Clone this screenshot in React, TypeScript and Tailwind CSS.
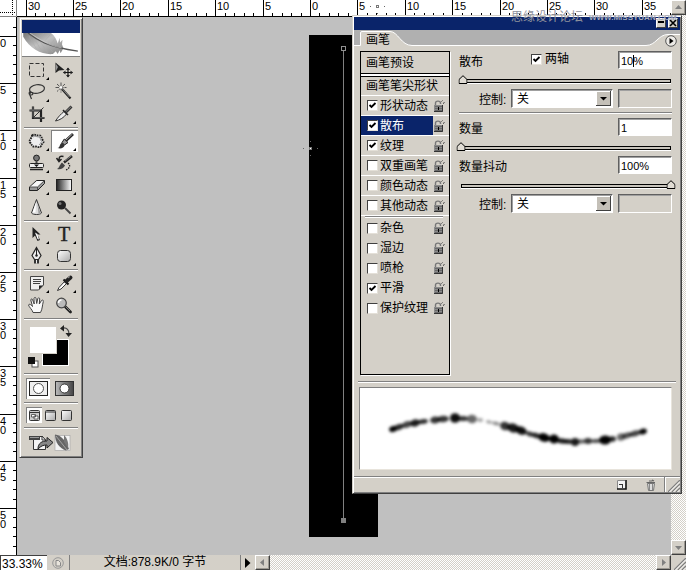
import { useEffect, useState } from "react"
import type { ReactNode } from "react"
import clsx from "clsx"

const range = (from: number, to: number) => Array.from({ length: Math.max(0, to - from + 1) }, (_, i) => from + i)

function useWindowSize() {
  const [size, setSize] = useState({ width: window.innerWidth, height: window.innerHeight })

  useEffect(() => {
    const onResize = () => setSize({ width: window.innerWidth, height: window.innerHeight })
    window.addEventListener("resize", onResize)
    return () => window.removeEventListener("resize", onResize)
  }, [])

  return size
}

// ---------- rulers ----------

function HorizontalRuler() {
  const { width } = useWindowSize()
  const last = Math.floor((width - 15 - 17 - 293 - 16) / 9.48)

  return (
    <svg className="block h-[17px] w-full" aria-hidden="true">
      {range(-30, last + 2).map((n) => {
        const x = Math.round(293 + n * 9.48)
        const major = n % 5 === 0
        return (
          <g key={n}>
            <rect x={x} y={major ? 0 : 13} width="1" height={major ? 17 : 4} />
            {major && n <= last && (
              <text x={x + 2} y="10" className="text-[11px]">
                {Math.abs(n)}
              </text>
            )}
          </g>
        )
      })}
      <rect y="16" width="100%" height="1" />
    </svg>
  )
}

function VerticalRuler() {
  const { height } = useWindowSize()
  const last = Math.floor((height - 32 - 19) / 9.44)
  const tickY = (n: number) => Math.round(19 + n * 9.44)

  return (
    <div className="relative w-[17px] shrink-0 bg-white" aria-hidden="true">
      <svg className="block h-full w-full">
        {range(-1, last).map((n) => (
          <rect key={n} x={n % 5 === 0 ? 0 : 13} y={tickY(n)} width={n % 5 === 0 ? 17 : 4} height="1" />
        ))}
        <rect x="16" width="1" height="100%" />
      </svg>
      {range(0, last - 2)
        .filter((n) => n % 5 === 0)
        .map((n) => (
          <span key={n} style={{ top: tickY(n) + 3 }} className="absolute left-0 w-[7px] text-[11px] leading-[9px] break-all">
            {n}
          </span>
        ))}
    </div>
  )
}

// ---------- scrollbars ----------

const dither = "bg-[repeating-conic-gradient(#ffffff_0_25%,#d4d0c8_0_50%)] bg-[length:2px_2px]"

function ScrollButton({ label, points }: { label: string; points: string }) {
  return (
    <button
      aria-label={label}
      className="h-[15px] w-[15px] shrink-0 border border-t-white border-l-white border-r-[#404040] border-b-[#404040] bg-[#d4d0c8] shadow-[inset_-1px_-1px_#9a9790]"
    >
      <svg viewBox="0 0 13 13" className="block h-[13px] w-[13px]">
        <polygon points={points} fill="#808080" />
      </svg>
    </button>
  )
}

function Grip() {
  return (
    <svg viewBox="0 0 12 12" className="block size-3 shrink-0">
      <path d="M0 12L12 0M4 12L12 4M8 12L12 8" stroke="#808080" strokeWidth="1.3" />
      <path d="M1.5 12L12 1.5M5.5 12L12 5.5M9.5 12L12 9.5" stroke="#fff" strokeWidth="1" />
    </svg>
  )
}

// ---------- toolbox ----------

type Tool = { name: string; more?: boolean; icon: ReactNode }

const toolGroups: Tool[][] = [
  [
    {
      name: "矩形选框",
      more: true,
      icon: <rect x="5.5" y="4.5" width="14" height="13" fill="none" stroke="#333" strokeDasharray="4 2" />,
    },
    {
      name: "移动",
      icon: (
        <>
          <path d="M4.5 3.5V14L8 11.5L13.5 11Z" fill="#222" />
          <path d="M5 5V12L7 8Z" fill="#999" />
          <path d="M12.5 13.5H21.5M17 9V18" stroke="#111" strokeWidth="1.2" />
          <path d="M17 8.5L19 11H15ZM17 18.5L19 16H15ZM12 13.5L14.5 11.5V15.5ZM22 13.5L19.5 11.5V15.5Z" fill="#222" />
        </>
      ),
    },
    {
      name: "套索",
      more: true,
      icon: (
        <g fill="none" stroke="#333" strokeWidth="1.2">
          <ellipse cx="13" cy="8" rx="7.5" ry="4.3" transform="rotate(-8 13 8)" />
          <path d="M6 10.5C4.5 12 5 14 7 14C9 14 9.5 12 8 11.5C6 11.2 5 13 6.500 15.5L7.5 18" />
        </g>
      ),
    },
    {
      name: "魔棒",
      icon: (
        <>
          <path d="M4.5 6.5H15.5M10 1.5V11.5M6 3L14 10.5M14 3L6 10.5" stroke="#555" strokeDasharray="3.5 1" />
          <path d="M11 8L19.5 17.5" stroke="#222" strokeWidth="2.2" />
          <path d="M11.5 8L18.5 16" stroke="#aaa" strokeWidth=".7" />
          <circle cx="10" cy="6.5" r="1.3" fill="#fff" />
        </>
      ),
    },
    {
      name: "裁切",
      icon: (
        <>
          <path d="M9 3.5V15H20.5M5.5 7.5H17V19" fill="none" stroke="#222" strokeWidth="2.2" />
          <path d="M9 4V14.5M6 7.2H16.5M10 14.8H20" stroke="#888" strokeWidth=".7" />
          <path d="M10 14L19.5 4.5" stroke="#333" />
        </>
      ),
    },
    {
      name: "切片",
      more: true,
      icon: (
        <>
          <path d="M4.5 18C7 14 10 11 13 8.5L15.5 11C13 14.5 9 17 4.5 18Z" fill="#eee" stroke="#333" />
          <path d="M12 7L17 12" stroke="#222" strokeWidth="1.5" />
          <path d="M14.5 9.5L20.5 3.5" stroke="#333" strokeWidth="2.8" />
          <path d="M15 8.5L20 3.8" stroke="#999" strokeWidth=".8" />
        </>
      ),
    },
  ],
  [
    {
      name: "修补",
      more: true,
      icon: (
        <>
          <path d="M8 5.5C11 3.5 12 6 15 5.5C18 5.5 17 8 19 10.5C21 13 17 13.5 17 16C15 18.5 13 16 10.5 16.5C8 17 8 14.5 6 12.5C4.5 10 8 8.5 8 5.5Z" fill="#eee" stroke="#222" strokeWidth="1.9" strokeDasharray="1.7 .8" />
          <path d="M9 7C11 5.5 13 7 15 7C17 8 16 10 17.5 11.5C17 13 16 14 15 15" fill="none" stroke="#999" />
        </>
      ),
    },
    {
      name: "画笔",
      more: true,
      icon: (
        <>
          <path d="M14 11.5L22 4" stroke="#222" strokeWidth="2.8" />
          <path d="M15 10L21.5 4" stroke="#bbb" strokeWidth=".9" />
          <path d="M13.3 9L17 12.5L13.5 15L11 12.5Z" fill="#999" stroke="#222" />
          <path d="M6.5 18C9.5 17.5 8 14 11.2 12.5L13.7 15C13 18 10 19 6.500 18Z" fill="#333" />
        </>
      ),
    },
    {
      name: "图章",
      more: true,
      icon: (
        <>
          <circle cx="12.5" cy="6" r="2.9" fill="#777" stroke="#222" />
          <path d="M11.5 9H13.5V12.5H11.5Z" fill="#444" />
          <rect x="5.5" y="11.5" width="14" height="4" rx="1" fill="#eee" stroke="#222" />
          <path d="M10 12.5H15L12.5 15Z" fill="#111" />
          <path d="M6 17.5H19" stroke="#222" strokeWidth="1.5" />
        </>
      ),
    },
    {
      name: "历史记录画笔",
      more: true,
      icon: (
        <>
          <path d="M13 10.5L21 4" stroke="#222" strokeWidth="2.5" />
          <path d="M14 9L20.5 3.8" stroke="#aaa" strokeWidth=".7" />
          <path d="M6 17C8.5 16 8 13.5 11 10.5L14 13.5C12.5 16.5 9.5 18 6 17Z" fill="#444" />
          <path d="M12.500 4.5C9 3.5 8 5 8 8M5.5 6L8 9.5L10.5 7" fill="none" stroke="#222" strokeWidth="1.5" />
          <path d="M17 11C20 13 18.5 17 14.5 18" fill="none" stroke="#222" strokeWidth="1.3" strokeDasharray="1.5 1" />
        </>
      ),
    },
    {
      name: "橡皮擦",
      more: true,
      icon: (
        <>
          <path d="M5.5 13L12.5 6.5H20.5V9.5L13.5 16.5H5.5Z" fill="#999" stroke="#222" />
          <path d="M6 13L12.7 7H20L13.5 13Z" fill="#f8f8f8" />
          <path d="M5.5 13H13.5L20.5 6.5M13.5 13V16.5" fill="none" stroke="#444" strokeWidth=".9" />
        </>
      ),
    },
    {
      name: "渐变",
      more: true,
      icon: (
        <>
          <linearGradient id="gradientTool">
            <stop offset="0" stopColor="#222" />
            <stop offset="1" stopColor="#fff" />
          </linearGradient>
          <rect x="5.5" y="5.5" width="15" height="11" fill="url(#gradientTool)" stroke="#222" />
        </>
      ),
    },
    {
      name: "锐化",
      more: true,
      icon: (
        <>
          <path d="M12.5 3.5L17.5 17C16 19 9 19 7.5 17Z" fill="#ddd" stroke="#333" />
          <path d="M12 6L8.5 16.5H11.5Z" fill="#fff" />
          <path d="M13.5 8L16.5 17L14.5 17.5Z" fill="#999" />
        </>
      ),
    },
    {
      name: "减淡",
      more: true,
      icon: (
        <>
          <circle cx="10.5" cy="9" r="4.5" fill="#222" />
          <circle cx="9" cy="7.5" r="1.5" fill="#777" />
          <path d="M14 12L19.5 17.5" stroke="#444" strokeWidth="1.8" />
        </>
      ),
    },
  ],
  [
    {
      name: "路径选择",
      more: true,
      icon: (
        <>
          <path d="M8.5 4V15L11 12.5L13.500 18L16 17L13.5 11.5H16.500Z" fill="#222" />
          <path d="M11 9.5L13.5 11L15 16.5L13.500 16Z" fill="#fff" />
        </>
      ),
    },
    {
      name: "文字",
      more: true,
      icon: (
        <text x="13" y="18" textAnchor="middle" fill="#222" stroke="#222" strokeWidth=".4" className="font-['Liberation_Serif',serif] text-[20px]">
          T
        </text>
      ),
    },
    {
      name: "钢笔",
      more: true,
      icon: (
        <>
          <path d="M12.5 2.5L17 10.5L14.5 14.5H10.5L8 10.5Z" fill="#eee" stroke="#222" strokeWidth="1.2" />
          <path d="M12.5 3.5V10" stroke="#222" />
          <circle cx="12.5" cy="10.5" r="1.2" fill="#222" />
          <path d="M10 14.5H15V18.5H10Z" fill="#333" />
          <path d="M12.5 15V18.5" stroke="#eee" />
        </>
      ),
    },
    {
      name: "圆角矩形",
      more: true,
      icon: (
        <>
          <linearGradient id="shapeTool" x2="1" y2="1">
            <stop offset="0" stopColor="#fff" />
            <stop offset="1" stopColor="#aaa" />
          </linearGradient>
          <rect x="6.5" y="5.5" width="13" height="11" rx="3" fill="url(#shapeTool)" stroke="#333" />
        </>
      ),
    },
  ],
  [
    {
      name: "注释",
      more: true,
      icon: (
        <>
          <path d="M6.5 4.5H19.5V13L14.5 18H6.5Z" fill="#f0f0f0" stroke="#444" />
          <path d="M19 13.5H15V17.5Z" fill="#222" />
          <path d="M9 7.5H17M9 9.5H17M9 11.5H16" stroke="#444" />
        </>
      ),
    },
    {
      name: "吸管",
      more: true,
      icon: (
        <>
          <path d="M6.5 18.5L8 15.5L14 9L16 11L10 17Z" fill="#fff" stroke="#333" />
          <path d="M12.5 7.5L17.5 12.5" stroke="#111" strokeWidth="2" />
          <path d="M15 9.5L19.5 5.5" stroke="#222" strokeWidth="4" strokeLinecap="round" />
          <path d="M17 6L19 4.5" stroke="#999" />
        </>
      ),
    },
    {
      name: "抓手",
      icon: (
        <path
          d="M9 18.5C8.5 16 5 13 4.5 11C5 9.5 7 10.5 8.5 12.5L6.8 6C7 4.5 8.3 4.7 8.7 6L10.2 10L10 4.5C10.3 3 11.8 3 12 4.5L12.7 9.5L13.8 4.5C14.5 3.3 15.7 3.8 15.7 5L15.3 10L17.5 6.5C18.5 5.5 19.7 6.3 19.3 7.5C18.3 11 18.5 15 16.5 18.5Z"
          fill="#fafafa"
          stroke="#444"
        />
      ),
    },
    {
      name: "缩放",
      icon: (
        <>
          <path d="M14.5 13L19.5 18" stroke="#222" strokeWidth="2.8" strokeLinecap="round" />
          <path d="M14.5 12.5L19 17" stroke="#999" strokeWidth=".8" />
          <circle cx="10.5" cy="9" r="4.8" fill="#bbb" stroke="#444" strokeWidth="1.2" />
          <path d="M7.5 9A3 3 0 0 1 10.5 6" fill="none" stroke="#fff" strokeWidth="1.5" />
        </>
      ),
    },
  ],
]

function Divider() {
  return <div className="mt-0.5 mb-px h-0.5 border-t border-t-[#808080] bg-white" />
}

function Feather() {
  return (
    <svg viewBox="0 0 58 24" className="block h-6 w-full border-b border-[#808080] bg-white">
      <linearGradient id="feather" x1="0" y1="0" x2="1" y2="1">
        <stop offset="0" stopColor="#777" />
        <stop offset=".45" stopColor="#c0c0c0" />
        <stop offset="1" stopColor="#858585" />
      </linearGradient>
      <path d="M0 0H29C33 3 35 7 36 11L38 5L38.5 10L41 7L40.5 12L42 16L39 21L38 18L36 22L34 19L31 22C20 23 7 17 0 4Z" fill="url(#feather)" />
      <path d="M6 3L14 17M11 5L20 20M17 8L26 21M23 11L31 20M14 6L22 0M21 10L28 2M28 13L33 6" stroke="#aaa" strokeWidth=".5" />
      <path d="M5 0C14 7 24 14 57 19" fill="none" stroke="#555" strokeWidth="1.3" />
      <path d="M7 0C16 6 26 13 40 15.5" fill="none" stroke="#ddd" strokeWidth=".6" />
    </svg>
  )
}

function Toolbox() {
  const [tool, setTool] = useState("画笔")

  return (
    <aside
      aria-label="工具"
      className="absolute top-[17px] left-[19px] w-16 border border-t-[#d4d0c8] border-l-[#d4d0c8] border-r-[#404040] border-b-[#404040] bg-[#d4d0c8] p-0.5 shadow-[inset_1px_1px_#fff,inset_-1px_-1px_#808080]"
    >
      <div className="h-[13px] bg-[#0a246a]" />
      <Feather />
      <div className="mx-0.5 pt-0.5">
        {toolGroups.map((group, i) => (
          <div key={i}>
            <div className="grid grid-cols-2">
              {group.map((t) => (
                <button
                  key={t.name}
                  aria-label={t.name}
                  aria-pressed={tool === t.name}
                  onClick={() => setTool(t.name)}
                  className={clsx("h-[22px]", tool === t.name && "bg-white shadow-[inset_1px_1px_#808080]")}
                >
                  <svg viewBox="0 0 26 22" className="block h-[22px] w-[26px]">
                    {t.icon}
                    {t.more && <path d="M25 18V21H22Z" />}
                  </svg>
                </button>
              ))}
            </div>
            <Divider />
          </div>
        ))}

        {/* foreground / background colours */}
        <div className="relative h-[50px]">
          <button aria-label="背景色" className="absolute top-[18px] left-[18px] size-[27px] border border-white bg-black" />
          <button aria-label="前景色" className="absolute top-[5px] left-[5px] size-[28px] border border-[#d4d0c8] bg-white" />
          <svg viewBox="0 0 12 12" className="absolute top-1 left-9 size-3">
            <path d="M3 3C7 2.5 9 5 9 9" fill="none" stroke="#444" strokeWidth="1.2" />
            <path d="M0 3.5L4 0V6.5ZM8.500 12L5.500 8H12Z" fill="#222" />
          </svg>
          <svg viewBox="0 0 11 11" className="absolute top-9 left-1 size-[11px]">
            <rect x="4" y="4" width="6" height="6" fill="#fff" stroke="#555" />
            <rect x="0" y="0" width="7" height="7" fill="#111" />
          </svg>
        </div>
        <Divider />

        {/* mask modes */}
        <div className="flex h-6 items-center gap-0.5 pl-0.5">
          <button aria-label="标准模式" className="flex h-[21px] w-6 items-center justify-center border-t border-l border-[#808080] bg-white">
            <svg viewBox="0 0 19 15" className="h-[15px] w-[19px]">
              <rect x=".5" y=".5" width="18" height="14" fill="#eee" stroke="#222" />
              <circle cx="9.5" cy="7.5" r="5" fill="#fff" stroke="#555" />
            </svg>
          </button>
          <button aria-label="快速蒙版模式" className="flex h-[21px] w-6 items-center justify-center">
            <svg viewBox="0 0 19 15" className="h-[15px] w-[19px]">
              <linearGradient id="mask">
                <stop offset="0" stopColor="#bbb" />
                <stop offset="1" stopColor="#444" />
              </linearGradient>
              <rect x=".5" y=".5" width="18" height="14" fill="url(#mask)" stroke="#333" />
              <circle cx="9.5" cy="7.5" r="4.5" fill="#fff" stroke="#333" />
            </svg>
          </button>
        </div>
        <Divider />

        {/* screen modes */}
        <div className="flex h-5 items-center pl-0.5">
          <button aria-label="标准屏幕模式" className="flex size-4 items-center justify-center border-t border-l border-[#808080] bg-white">
            <svg viewBox="0 0 11 11" className="size-[11px]">
              <rect x=".5" y=".5" width="10" height="10" rx="1" fill="#ccc" stroke="#333" />
              <path d="M1 2.5H10" stroke="#333" />
              <path d="M2.5 4.5H6.5V7H2.5ZM5 6H9V9H5Z" fill="#fff" stroke="#444" strokeWidth=".8" />
            </svg>
          </button>
          <button aria-label="带有菜单栏的全屏模式" className="flex size-4 items-center justify-center">
            <svg viewBox="0 0 11 11" className="size-[11px]">
              <rect x=".5" y=".5" width="10" height="10" rx="1" fill="url(#shapeTool)" stroke="#333" />
              <path d="M1 2H10" stroke="#333" />
            </svg>
          </button>
          <button aria-label="全屏模式" className="flex size-4 items-center justify-center">
            <svg viewBox="0 0 11 11" className="size-[11px]">
              <rect x=".5" y=".5" width="10" height="10" rx="1" fill="url(#shapeTool)" stroke="#333" />
            </svg>
          </button>
        </div>
        <Divider />

        <button aria-label="转到 ImageReady" className="block h-[25px] w-full pl-1">
          <svg viewBox="0 0 44 20" className="block h-5 w-11">
            <path d="M5.5 3.5H14L17.500 7V16.500H5.500Z" fill="#f4f4f4" stroke="#333" />
            <rect x="1" y="3" width="11" height="4" fill="#444" />
            <path d="M2 4.5H11" stroke="#999" />
            <path d="M14 3L17.5 7H14Z" fill="#fff" stroke="#333" />
            <path d="M10 16C10 10 14 8 19 8V4.5L25 9.5L19 15V12C15 12 13 13 10 16Z" fill="#888" stroke="#222" />
            <rect x="27" y="2.5" width="15" height="15" fill="#f4f4f4" stroke="#aaa" strokeWidth=".7" />
            <path d="M27 1.500C33 2 38 8 41 16L38 17.500C31 15 27 9 27 1.500Z" fill="#666" />
            <path d="M36 2C39 5 41 10 40 15L36 9Z" fill="#777" />
            <path d="M28 3L39 17" stroke="#ccc" strokeWidth=".6" />
          </svg>
        </button>
      </div>
    </aside>
  )
}

// ---------- brush panel ----------

const sunken = "border border-t-[#606060] border-l-[#606060] border-r-white border-b-white shadow-[inset_1px_1px_#a0a0a0]"

function Tick({ checked, onChange }: { checked: boolean; onChange: (v: boolean) => void }) {
  return (
    <span className="relative block size-[11px] shrink-0">
      <input
        type="checkbox"
        checked={checked}
        onChange={(e) => onChange(e.target.checked)}
        className="block size-[11px] appearance-none border border-t-[#404040] border-l-[#404040] border-r-[#e4e0d8] border-b-[#e4e0d8] bg-white"
      />
      {checked && (
        <svg viewBox="0 0 11 11" className="pointer-events-none absolute inset-0 size-[11px]">
          <path d="M2.5 5L4.5 7L8.5 3" fill="none" stroke="#000" strokeWidth="1.8" />
        </svg>
      )}
    </span>
  )
}

function Lock() {
  return (
    <svg viewBox="0 0 12 14" className="h-3.5 w-3 shrink-0">
      <path d="M2.500 7V4C2.500 1.500 7.500 1.500 7.500 4V5" fill="none" stroke="#777" strokeWidth="1.4" />
      <rect x="1" y="6" width="9" height="7" fill="#8a8a8a" />
      <path d="M1 12.500H9.500V6" fill="none" stroke="#333" />
      <path d="M2 7.500H9M2 9.500H9M2 11.500H9" stroke="#5a5a5a" strokeWidth=".7" />
      <rect x="5" y="8" width="1" height="3" fill="#000" />
      <path d="M8.500 2.500L9.500 1.500M10 4.500L11.500 3.500" stroke="#333" />
    </svg>
  )
}

const dynamics = ["形状动态", "散布", "纹理", "双重画笔", "颜色动态", "其他动态"]
const extras = ["杂色", "湿边", "喷枪", "平滑", "保护纹理"]

function OptionList() {
  const [on, setOn] = useState(["形状动态", "散布", "纹理", "平滑"])
  const toggle = (name: string, v: boolean) => setOn((prev) => (v ? [...prev, name] : prev.filter((n) => n !== name)))

  const row = (name: string, lined: boolean) => (
    <div key={name} className={clsx("flex h-5 items-center", lined && "border-b border-white")}>
      <label className={clsx("flex h-full flex-1 items-center gap-0.5 pl-1.5", name === "散布" && "bg-[#0a246a] text-white")}>
        <Tick checked={on.includes(name)} onChange={(v) => toggle(name, v)} />
        <span className="whitespace-nowrap">{name}</span>
      </label>
      <span className="flex w-4 shrink-0">
        <Lock />
      </span>
    </div>
  )

  return (
    <div className="w-[90px] shrink-0 border border-black pb-14 shadow-[1px_1px_#fff]">
      <button className="block h-[22px] w-full border-b border-black pl-[5px] text-left">画笔预设</button>
      <div className="h-[3px] border-b border-black bg-white" />
      <button className="block h-[19px] w-full border-b border-white pl-[5px] text-left whitespace-nowrap">画笔笔尖形状</button>
      {dynamics.map((name) => row(name, true))}
      <div className="mr-1.5 ml-1 h-0.5 border-t border-[#808080] bg-white" />
      {extras.map((name) => row(name, false))}
    </div>
  )
}

type SliderRowProps = { label: string; unit?: string; initial: number; min: number; max: number; caret?: boolean; children?: ReactNode }

function SliderRow({ label, unit = "", initial, min, max, caret, children }: SliderRowProps) {
  const [value, setValue] = useState(initial)

  return (
    <>
      <div className="flex h-[18px] items-center">
        <label htmlFor={label} className="w-[72px] pt-[3px]">
          {label}
        </label>
        {children}
        <span className="relative ml-auto block">
          <input
            id={label}
            value={value + unit}
            onChange={(e) => setValue(Math.min(max, parseInt(e.target.value) || min))}
            className={clsx("block h-[18px] w-[54px] bg-white pt-0.5 pl-0.5 text-[11px]", sunken)}
          />
          {caret && <span className="absolute top-1 left-[15px] h-3 w-px bg-black" />}
        </span>
      </div>
      <div className="relative mr-px ml-0.5 mt-1 flex h-2.5 items-end">
        <input
          type="range"
          aria-label={label}
          min={min}
          max={max}
          value={value}
          onChange={(e) => setValue(Number(e.target.value))}
          className="block h-1 w-full appearance-none border border-black bg-[#c8c4bc] shadow-[0_1px_#fff] [&::-webkit-slider-thumb]:size-2 [&::-webkit-slider-thumb]:appearance-none"
        />
        <svg
          viewBox="0 0 9 9"
          style={{ left: `${((value - min) / (max - min)) * 100}%` }}
          className="pointer-events-none absolute -bottom-px size-[9px] -translate-x-1/2"
        >
          <path d="M.5 8.5V4.500L4.500 .7L8.500 4.500V8.500Z" fill="#e0dcd4" stroke="#000" />
        </svg>
      </div>
    </>
  )
}

function ControlRow({ id }: { id: string }) {
  return (
    <div className="mt-1.5 flex h-[19px] items-center pl-5">
      <label htmlFor={id} className="w-8 pt-0.5">
        控制:
      </label>
      <span className="relative block w-[102px]">
        <select id={id} className={clsx("block h-[19px] w-full appearance-none bg-white pt-px pl-[5px]", sunken)}>
          <option>关</option>
          <option>渐隐</option>
          <option>钢笔压力</option>
        </select>
        <svg viewBox="0 0 15 15" className="pointer-events-none absolute top-0.5 right-0.5 size-[15px]">
          <rect width="15" height="15" fill="#404040" />
          <rect width="14" height="14" fill="#fff" />
          <rect x="1" y="1" width="13" height="13" fill="#c4c0b8" />
          <path d="M4 6H11L7.500 9.500Z" />
        </svg>
      </span>
      <input aria-label="渐隐步数" disabled className={clsx("ml-auto block h-[19px] w-[54px] bg-[#d4d0c8]", sunken)} />
    </div>
  )
}

// x, y, half length, half thickness, angle, opacity
const dabs = [
  [33, 41, 4, 3, -20, 1],
  [39, 39, 5, 2.8, -20, 0.85],
  [47, 36.5, 5, 3.2, -18, 0.75],
  [55, 35, 5, 3.6, -12, 0.9],
  [63, 33.5, 5, 2.4, -10, 0.85],
  [75, 32, 5, 3.4, -6, 0.8],
  [83, 31, 6, 3.2, -4, 0.8],
  [95, 30, 5, 4.8, 0, 0.95],
  [103, 30.5, 5, 2.6, 0, 0.8],
  [112, 31, 5, 4.2, 4, 0.6],
  [120, 32, 3, 2, 8, 0.35],
  [129, 34, 3, 1.5, 12, 0.4],
  [136, 35.5, 4, 1.8, 14, 0.45],
  [145, 38, 5, 4.2, 18, 0.8],
  [153, 40, 6, 4.4, 20, 0.9],
  [161, 42.5, 6, 4, 22, 0.95],
  [170, 46, 4, 2.4, 20, 0.8],
  [176, 47.5, 4, 2.6, 18, 0.85],
  [184, 49.5, 6, 4.2, 16, 1],
  [194, 51, 5, 4.6, 10, 1],
  [202, 53, 5, 2.6, 5, 0.9],
  [208, 53.5, 4, 2.6, 4, 0.85],
  [215, 54, 4, 4, 0, 0.9],
  [221, 53.5, 4, 2.2, 0, 0.6],
  [228, 53, 4, 3, 0, 0.8],
  [236, 53, 5, 2, -4, 0.7],
  [245, 52, 6, 4.6, -4, 1],
  [252, 51, 4, 2.8, -8, 0.85],
  [261, 49, 4, 3.6, -12, 0.6],
  [267, 47.5, 5, 2.8, -16, 0.7],
  [275, 45.5, 6, 2.8, -16, 0.75],
  [283, 43.5, 4, 2.8, -18, 1],
]

function StrokePreview() {
  return (
    <div className="mt-1 mr-2 ml-[5px] border border-t-[#808080] border-l-[#808080] border-r-[#e8e4dc] border-b-[#e8e4dc] bg-white">
      <svg viewBox="0 0 311 81" className="block h-[81px] w-full">
        <filter id="soft" x="-10%" y="-50%" width="120%" height="200%">
          <feGaussianBlur stdDeviation="1.5" />
        </filter>
        <g filter="url(#soft)">
          {dabs.map(([x, y, rx, ry, angle, opacity]) => (
            <ellipse key={x} cx={x} cy={y} rx={rx} ry={ry} opacity={opacity} transform={`rotate(${angle} ${x} ${y})`} />
          ))}
        </g>
      </svg>
    </div>
  )
}

const captionButton = "flex h-2.5 w-2.5 items-center justify-center border border-t-white border-l-white border-r-[#404040] border-b-[#404040] bg-[#d4d0c8]"

function BrushPanel() {
  const [bothAxes, setBothAxes] = useState(true)

  return (
    <section
      aria-label="画笔"
      className="absolute top-[15px] left-[352px] w-[330px] border border-t-[#d4d0c8] border-l-[#d4d0c8] border-r-[#404040] border-b-[#404040] bg-[#d4d0c8] p-px shadow-[inset_1px_1px_#fff,inset_-1px_-1px_#808080]"
    >
      <div className="flex h-[13px] items-end justify-end gap-0.5 bg-[#0a246a] pr-0.5 pb-0.5">
        <button aria-label="最小化" className={captionButton}>
          <svg viewBox="0 0 8 8" className="size-2">
            <path d="M1 3H7" stroke="#000" strokeWidth="2" />
          </svg>
        </button>
        <button aria-label="关闭" className={captionButton}>
          <svg viewBox="0 0 8 8" className="size-2">
            <path d="M1 1L7 7M7 1L1 7" stroke="#000" strokeWidth="1.6" />
          </svg>
        </button>
      </div>

      <div className="relative flex h-4 justify-between bg-[#b0b0b0] pr-[3px] pl-3">
        <svg viewBox="0 0 326 16" preserveAspectRatio="none" className="absolute inset-0 h-4 w-full">
          <path
            d="M-1 15.5H6.500V3Q6.500 1.500 8 1.500H36C44 1.500 47 15.500 58 15.500H292C302 15.500 304 4.500 314 4.500H327V18H-1Z"
            fill="#d4d0c8"
            stroke="#fff"
          />
        </svg>
        <span className="relative leading-5">画笔</span>
        <button aria-label="面板菜单" className="relative mt-[5px] size-3">
          <svg viewBox="0 0 12 12" className="size-3">
            <circle cx="6" cy="6" r="5.3" fill="#eceae6" stroke="#555" />
            <path d="M4.5 3V9L8.500 6Z" />
          </svg>
        </button>
      </div>

      <div className="flex gap-[9px] pt-[5px] pr-2 pl-1.5">
        <OptionList />
        <div className="min-w-0 flex-1">
          <SliderRow label="散布" unit="%" initial={10} min={0} max={1000} caret>
            <label className="flex items-center gap-[3px] pb-0.5">
              <Tick checked={bothAxes} onChange={setBothAxes} />
              两轴
            </label>
          </SliderRow>
          <ControlRow id="scatter-control" />
          <div className="my-1 h-0.5 border-t border-[#808080] bg-white" />
          <SliderRow label="数量" initial={1} min={1} max={16} />
          <div className="h-1.5" />
          <SliderRow label="数量抖动" unit="%" initial={100} min={0} max={100} />
          <ControlRow id="count-control" />
        </div>
      </div>

      <div className="mx-1 mt-1.5 h-0.5 border-t border-[#808080] bg-white" />
      <StrokePreview />

      <div className="mt-1.5 flex h-4 items-center justify-end border-t border-[#808080] shadow-[inset_0_1px_#fff]">
        <button aria-label="创建新画笔" className="mr-[18px]">
          <svg viewBox="0 0 11 11" className="block size-[11px]">
            <rect x="1" y="1" width="9" height="9" fill="#f4f4f4" />
            <path d="M1.500 10V1.500H9" fill="none" stroke="#888" />
            <path d="M1 10H10V1" fill="none" stroke="#111" strokeWidth="1.600" />
            <path d="M3 5H7V9H6V6H3Z" fill="#333" />
          </svg>
        </button>
        <button aria-label="删除画笔" className="mr-2">
          <svg viewBox="0 0 11 12" className="block h-3 w-[11px]">
            <path d="M2.5 4.5L3.5 11.5H8.500L9.500 4.500Z" fill="#ddd" stroke="#777" />
            <path d="M4.500 5V11M7.500 5V11" stroke="#888" />
            <path d="M1.5 3.5H10M4 2H7.500M7 1L9 2" stroke="#666" strokeWidth="1.2" />
          </svg>
        </button>
        <span className="h-full w-0.5 border-l border-[#808080] bg-white" />
        <span className="ml-0.5 self-end">
          <Grip />
        </span>
      </div>
    </section>
  )
}

// ---------- document ----------

function BrushCursor({ className }: { className: string }) {
  return (
    <svg viewBox="0 0 17 17" className={clsx("pointer-events-none absolute size-[17px]", className)}>
      <rect x="7.5" y="7.5" width="2" height="2" fill="#fff" stroke="#777" />
      <path d="M1 8H2V9H1ZM15 8H16V9H15ZM8 1H9V2H8ZM8 15H9V16H8Z" fill="#666" />
    </svg>
  )
}

function Document() {
  return (
    <main className="relative min-w-0 flex-1 overflow-hidden bg-[#c0c0c0]">
      <div className="absolute top-[18px] left-[292px] h-[502px] w-[69px] bg-black">
        <svg viewBox="0 0 69 502" className="block h-full w-full">
          <path d="M34.5 16V483" stroke="#808080" />
          <rect x="32.5" y="11.5" width="4" height="4" fill="#000" stroke="#909090" />
          <rect x="32" y="483" width="5" height="5" fill="#808080" />
        </svg>
      </div>
    </main>
  )
}

function StatusBar() {
  return (
    <footer className="flex h-[15px] shrink-0 bg-[#d4d0c8] text-xs leading-[15px]">
      <input
        aria-label="缩放比例"
        defaultValue="33.33%"
        className="block h-[15px] w-[47px] shrink-0 border-t border-l border-[#404040] bg-white pt-px pl-px text-xs"
      />
      <div className="flex w-[23px] shrink-0 items-center justify-center border-r border-[#808080]">
        <svg viewBox="0 0 12 12" className="size-3 shrink-0">
          <circle cx="6" cy="6" r="5.3" fill="none" stroke="#999" />
          <path d="M4 3.5H6.500L8.500 5.500V9H4Z" fill="#e8e4dc" stroke="#888" />
        </svg>
      </div>
      <div className="w-[171px] shrink-0 border-r border-[#808080] text-center whitespace-nowrap">文档:878.9K/0 字节</div>
      <button aria-label="状态选项" className="flex w-[14px] shrink-0 items-center justify-center">
        <svg viewBox="0 0 6 10" className="h-2.5 w-1.5">
          <path d="M0 0V10L5.5 5Z" />
        </svg>
      </button>
      <ScrollButton label="向左滚动" points="8,3 8,10 4,6.5" />
      <div className={clsx("flex-1", dither)} />
      <ScrollButton label="向右滚动" points="5,3 5,10 9,6.5" />
      <div className="flex w-[15px] shrink-0 items-end justify-end">
        <Grip />
      </div>
    </footer>
  )
}

export default function App() {
  return (
    <div className="relative flex h-screen flex-col overflow-hidden bg-[#c0c0c0] font-['Liberation_Sans','Noto_Sans_CJK_SC',sans-serif] text-xs text-black">
      <div className="flex min-h-0 flex-1">
        <div className="flex min-w-0 flex-1 flex-col">
          <div className="flex h-[17px] shrink-0 bg-white">
            <svg viewBox="0 0 17 17" className="size-[17px] shrink-0">
              <path d="M12.5 0V17M0 12.5H17" stroke="#000" strokeDasharray="1 1" />
              <path d="M16.5 0V16.5H0" fill="none" stroke="#808080" />
            </svg>
            <div className="min-w-0 flex-1 overflow-hidden">
              <HorizontalRuler />
            </div>
          </div>
          <div className="flex min-h-0 flex-1">
            <VerticalRuler />
            <Document />
          </div>
        </div>
        <div className="flex w-[15px] shrink-0 flex-col">
          <ScrollButton label="向上滚动" points="3,8 10,8 6.5,4" />
          <div className={clsx("flex-1", dither)} />
          <ScrollButton label="向下滚动" points="3,5 10,5 6.5,9" />
        </div>
      </div>
      <StatusBar />

      <BrushCursor className="top-[140px] left-[302px]" />
      <BrushCursor className="-top-0.5 left-[369px]" />
      <Toolbox />
      <BrushPanel />

      <div className="pointer-events-none absolute top-2 left-[511px] flex items-center gap-1.5 whitespace-nowrap text-[#8f929c]">
        <span className="leading-4">思缘设计论坛</span>
        <span className="pt-0.5 text-[8px] leading-4 font-bold text-[#a4a8b8]">WWW.MISSYUAN.COM</span>
      </div>
    </div>
  )
}
